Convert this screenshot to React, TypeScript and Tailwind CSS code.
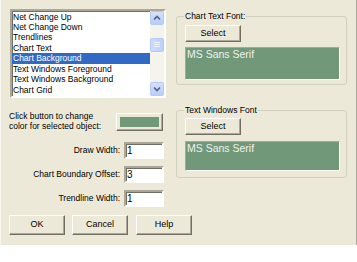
import React from "react";

const items = [
  "Net Change Up",
  "Net Change Down",
  "Trendlines",
  "Chart Text",
  "Chart Background",
  "Text Windows Foreground",
  "Text Windows Background",
  "Chart Grid",
  "Point&Figure Up Adj",
];

const raised =
  "border border-t-white border-l-white border-r-[#716f64] border-b-[#716f64] shadow-[inset_-1px_-1px_0_#aca899]";
const sunken =
  "border-2 border-t-[#aca899] border-l-[#aca899] border-r-white border-b-white shadow-[inset_1px_1px_0_#716f64]";

function Button({ label, className = "" }: { label: string; className?: string }) {
  return (
    <div
      className={`${raised} flex items-center justify-center bg-[#ece9d8] text-[9px] text-black ${className}`}
    >
      {label}
    </div>
  );
}

function ScrollButton({ dir }: { dir: "up" | "down" }) {
  return (
    <div className="w-[14px] h-[14px] rounded-[2px] border border-[#b5c9f5] bg-gradient-to-b from-[#d4e0fc] to-[#b9cdf9] flex items-center justify-center">
      <svg width="8" height="6" viewBox="0 0 8 6">
        <path
          d={dir === "up" ? "M1 4.5 L4 1.5 L7 4.5" : "M1 1.5 L4 4.5 L7 1.5"}
          fill="none"
          stroke="#4d6185"
          strokeWidth="1.6"
        />
      </svg>
    </div>
  );
}

function ListBox() {
  return (
    <div className={`${sunken} w-[156px] h-[89px] bg-white flex overflow-hidden`}>
      <div className="flex-1 pt-[0.5px] overflow-hidden">
        {items.map((item) => (
          <div
            key={item}
            className={`h-[10.45px] leading-[10.45px] pl-[1px] text-[8.5px] whitespace-nowrap ${
              item === "Chart Background" ? "bg-[#316ac5] text-white" : "text-black"
            }`}
          >
            {item}
          </div>
        ))}
      </div>
      {/* XP scrollbar */}
      <div className="w-[14px] bg-[#f5f4ec] flex flex-col justify-between">
        <ScrollButton dir="up" />
        <div className="h-[14px] -mt-[18px] rounded-[2px] border border-[#b5c9f5] bg-gradient-to-r from-[#cddbfb] to-[#bcd0fa] flex flex-col items-center justify-center gap-[1px]">
          <div className="w-[6px] h-[1px] bg-[#eef3fe]" />
          <div className="w-[6px] h-[1px] bg-[#eef3fe]" />
          <div className="w-[6px] h-[1px] bg-[#eef3fe]" />
        </div>
        <ScrollButton dir="down" />
      </div>
    </div>
  );
}

function NumberRow({ label, value }: { label: string; value: string }) {
  return (
    <div className="flex items-center h-[17px]">
      <div className="w-[111px] text-right text-[8.5px] text-black pr-[1px]">{label}</div>
      <div className={`${sunken} ml-[3px] w-[40px] h-[17px] bg-white text-[10px] leading-[13px] pl-[1px]`}>
        {value}
      </div>
    </div>
  );
}

function FontGroup({
  title,
  greenHeight,
  padTop,
  gap,
  height,
}: {
  title: string;
  greenHeight: string;
  padTop: string;
  gap: string;
  height: string;
}) {
  return (
    <div className={`relative w-[171px] ${height} border border-[#d0d0bf] rounded-[3px] pl-[8px] ${padTop}`}>
      <span className="absolute -top-[6px] left-[7px] px-[1px] bg-[#ece9d8] text-[8.5px] leading-[10px] text-black">
        {title}
      </span>
      <Button label="Select" className="w-[56px] h-[17px]" />
      <div
        className={`${gap} w-[155px] ${greenHeight} bg-[#719879] border border-t-[#aca899] border-l-[#aca899] border-r-white border-b-white text-[10.5px] leading-[13px] text-[#eef2ee] pl-[1px]`}
      >
        MS Sans Serif
      </div>
    </div>
  );
}

export default function App() {
  return (
    <div className="w-[357px] h-[262px] bg-white" style={{ fontFamily: '"Liberation Sans", Arial, sans-serif' }}>
      <div className="w-[357px] h-[245px] bg-[#ece9d8] border-l border-l-[#f7f6f0] border-r border-r-[#aca899] flex flex-col">
        <div className="flex pl-[9px] pt-[9px]">
          {/* Left column */}
          <div className="w-[157px] flex flex-col">
            <ListBox />
            <div className="flex items-start mt-[15px]">
              <div className="w-[107px] -ml-[1px] -mt-[2px] text-[8.5px] leading-[10px] text-black">
                Click button to change
                <br />
                color for selected object:
              </div>
              <div className={`${raised} w-[47px] h-[18px] bg-[#ece9d8] p-[3px] pb-[3px]`}>
                <div className="w-full h-full bg-[#719879]" />
              </div>
            </div>
            <div className="mt-[11px] flex flex-col gap-[7px]">
              <NumberRow label="Draw Width:" value="1" />
              <NumberRow label="Chart Boundary Offset:" value="3" />
              <NumberRow label="Trendline Width:" value="1" />
            </div>
          </div>
          {/* Right column */}
          <div className="ml-[9px] mt-[7px] flex flex-col">
            <FontGroup title="Chart Text Font:" greenHeight="h-[33px]" padTop="pt-[8px]" gap="mt-[5px]" height="h-[69px]" />
            <div className="mt-[25px]">
              <FontGroup title="Text Windows Font" greenHeight="h-[30px]" padTop="pt-[7px]" gap="mt-[6px]" height="h-[68px]" />
            </div>
          </div>
        </div>
        <div className="flex mt-[8px] pl-[8px]">
          <Button label="OK" className="w-[56px] h-[20px]" />
          <Button label="Cancel" className="w-[56px] h-[20px] ml-[7px]" />
          <Button label="Help" className="w-[56px] h-[20px] ml-[8px]" />
        </div>
      </div>
    </div>
  );
}
